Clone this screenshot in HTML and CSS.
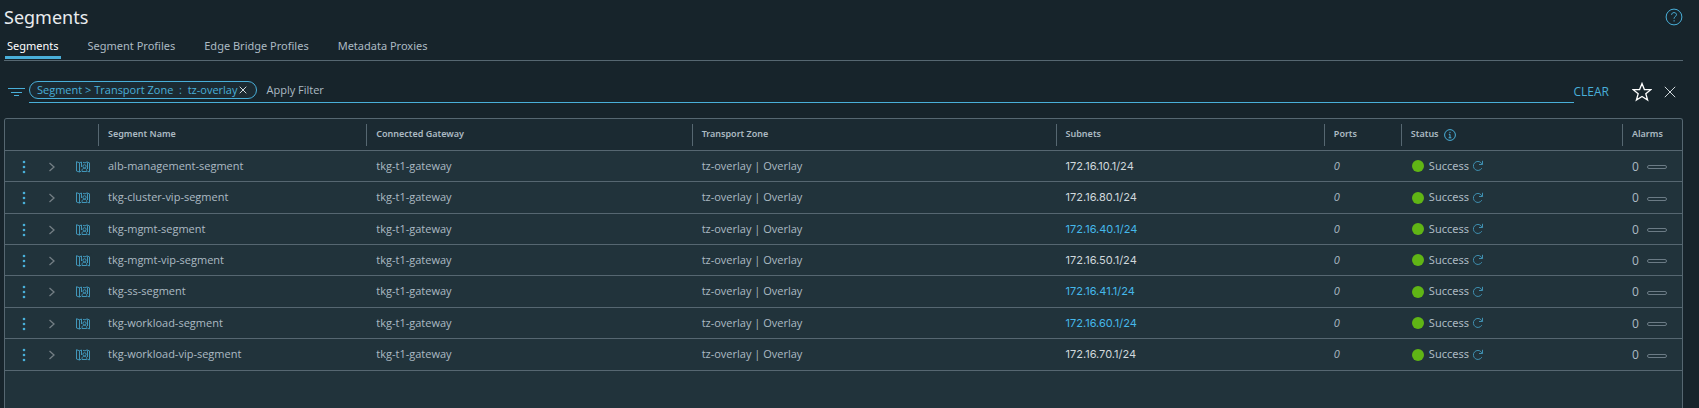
FILE: index.html
```html
<!DOCTYPE html>
<html lang="en">
<head>
<meta charset="utf-8">
<title>Segments</title>
<link rel="stylesheet" href="styles.css">
</head>
<body>
<svg class="sprite" aria-hidden="true">
  <symbol id="i-dots" viewBox="0 0 4 14"><circle cx="2" cy="2" r="1.300"/><circle cx="2" cy="7" r="1.300"/><circle cx="2" cy="12" r="1.300"/></symbol>
  <symbol id="i-chevron" viewBox="0 0 8 12"><path d="M1.500 2 6 6 1.500 10"/></symbol>
  <symbol id="i-segment" viewBox="0 0 14 12"><path d="M5 10.300 3.500 11 .5 10V.7l3 1.100 2-.8M3.500 1.800V11M7 1.300l2 .6L11 .9l2.500 1v9l-2-.6M11.500 1.500V8M5.500 1v5"/><circle cx="8.500" cy="5.300" r="1.600"/><path d="M6 10.500V9.500C6 8 7 7.300 8.500 7.300s2.200.7 2.200 2.200v1Z"/></symbol>
  <symbol id="i-refresh" viewBox="0 0 12 12"><path d="M9.800 8.200A4.500 4.500 0 1 1 9.300 3L10.500 4.300M10.500.8v3.700H7"/></symbol>
</svg>
<div class="page">
  <header class="page-head">
    <h1 class="title">Segments</h1>
    <button class="icon-btn" type="button" aria-label="Help">
      <svg class="help" viewBox="0 0 18 18"><circle cx="9" cy="9" r="7.900"/><path d="M6.600 6.800C6.700 5.300 7.700 4.600 9 4.600s2.500.8 2.500 2.100c0 1.700-2.400 1.900-2.400 3.700v.4M9.100 12.200v1.300"/></svg>
    </button>
  </header>
  <nav class="tabs">
    <a class="tab tab-active" href="#segments" aria-current="page">Segments</a>
    <a class="tab" href="#profiles">Segment Profiles</a>
    <a class="tab" href="#bridge">Edge Bridge Profiles</a>
    <a class="tab" href="#proxies">Metadata Proxies</a>
  </nav>
  <div class="filter">
    <svg class="filter-icon" viewBox="0 0 17 10"><path d="M0 1.500h17M3 5.500h11M6 8.500h5"/></svg>
    <div class="filter-field">
      <span class="chip"><span>Segment &gt; Transport Zone&nbsp; :&nbsp; </span><span class="chip-value">tz-overlay</span>
        <button class="icon-btn" type="button" aria-label="Remove filter"><svg class="chip-x" viewBox="0 0 8 8"><path d="M.7.7l6.600 6.600M7.300.7.7 7.300"/></svg></button>
      </span>
      <input class="filter-input" type="text" placeholder="Apply Filter" aria-label="Apply Filter">
    </div>
    <button class="clear" type="button">CLEAR</button>
    <button class="icon-btn" type="button" aria-label="Save filter"><svg class="star" viewBox="0 0 20 20"><path d="M10 1.500 12.400 7.500 18.800 7.700 13.800 11.700 15.600 18 10 14.400 4.400 18 6.200 11.700 1.200 7.700 7.600 7.500Z"/></svg></button>
    <button class="icon-btn" type="button" aria-label="Close filter"><svg class="close" viewBox="0 0 12 12"><path d="M.8.8l10.400 10.400M11.200.8.8 11.200"/></svg></button>
  </div>
  <main class="panel">
    <table class="grid">
      <colgroup><col class="c-icons"><col class="c-name"><col class="c-gateway"><col class="c-zone"><col class="c-subnet"><col class="c-ports"><col><col class="c-alarms"></colgroup>
      <thead>
        <tr>
          <td></td>
          <th scope="col"><div class="head">Segment Name</div></th>
          <th scope="col"><div class="head">Connected Gateway</div></th>
          <th scope="col"><div class="head">Transport Zone</div></th>
          <th scope="col"><div class="head">Subnets</div></th>
          <th scope="col"><div class="head">Ports</div></th>
          <th scope="col"><div class="head">Status <svg class="info" viewBox="0 0 12 12"><circle cx="6" cy="6" r="5.400"/><path d="M6 2.800v1.200M4.800 5.300H6v3.500M4.600 8.800h2.800"/></svg></div></th>
          <th scope="col"><div class="head">Alarms</div></th>
        </tr>
      </thead>
      <tbody id="rows"></tbody>
    </table>
  </main>
</div>
<script src="app.js"></script>
</body>
</html>
```
FILE: app.js
```js
const segments = [
  ["alb-management-segment", "172.16.10.1/24", false],
  ["tkg-cluster-vip-segment", "172.16.80.1/24", false],
  ["tkg-mgmt-segment", "172.16.40.1/24", true],
  ["tkg-mgmt-vip-segment", "172.16.50.1/24", false],
  ["tkg-ss-segment", "172.16.41.1/24", true],
  ["tkg-workload-segment", "172.16.60.1/24", true],
  ["tkg-workload-vip-segment", "172.16.70.1/24", false]
];

document.getElementById("rows").innerHTML = segments.map(([name, subnet, linked]) => `
  <tr>
    <td><div class="actions">
      <button class="icon-btn" type="button" aria-label="Actions for ${name}"><svg class="dots"><use href="#i-dots"/></svg></button>
      <button class="icon-btn" type="button" aria-label="Expand ${name}"><svg class="chevron"><use href="#i-chevron"/></svg></button>
      <svg class="segment"><use href="#i-segment"/></svg>
    </div></td>
    <td>${name}</td>
    <td>tkg-t1-gateway</td>
    <td>tz-overlay | Overlay</td>
    <td class="subnet">${linked ? `<a class="link" href="#subnet">${subnet}</a>` : subnet}</td>
    <td class="ports">0</td>
    <td><div class="status"><span class="dot"></span><span>Success</span>
      <button class="icon-btn" type="button" aria-label="Refresh ${name}"><svg class="refresh"><use href="#i-refresh"/></svg></button></div></td>
    <td><div class="alarms"><span>0</span><span class="pill"></span></div></td>
  </tr>`).join("");
```
FILE: styles.css
```css
* { box-sizing: border-box; }
body {
  margin: 0;
  background: #17242b;
  color: #acbac3;
  font: 11px/16px "Open Sans", "Noto Sans", sans-serif;
}
svg { display: block; flex: none; fill: none; stroke: currentColor; }
button { padding: 0; border: 0; background: none; color: inherit; font: inherit; cursor: pointer; }
.sprite { position: absolute; width: 0; height: 0; }
.icon-btn { display: flex; }
.page { display: flex; flex-direction: column; height: 100vh; padding: 0 16px 0 4px; overflow: hidden; }
.page-head { display: flex; align-items: center; justify-content: space-between; height: 34px; }
.title { margin: 0; color: #e9ecef; font: 400 18px/24px "Noto Sans", sans-serif; }
.help { width: 18px; height: 18px; color: #49afd9; }
.tabs { display: flex; gap: 25px; height: 27px; padding-left: 1px; border-bottom: 1px solid #566771; font-family: "Noto Sans", sans-serif; }
.tab { height: 25px; padding: 4px 2px 0; color: #acbac3; text-decoration: none; }
.tab-active { border-bottom: 3px solid #49afd9; color: #fff; }
.filter { display: flex; align-items: center; margin-top: 18px; height: 25px; padding-right: 7px; }
.filter-icon { width: 17px; height: 10px; margin: 0 4px; color: #49afd9; }
.filter-field { display: flex; flex: 1; align-items: flex-start; gap: 9px; height: 22px; border-bottom: 1px solid #49afd9; }
.chip { display: flex; align-items: center; height: 18px; padding: 0 9px 0 7px; border: 1px solid #49afd9; border-radius: 9px; background: #1b2a32; color: #49afd9; white-space: pre; }
.chip-value { margin-right: 2px; }
.chip-x { width: 8px; height: 8px; color: #d0d8dc; }
.filter-input { flex: 1; height: 18px; padding: 0; border: 0; outline: 0; background: none; color: #acbac3; font: inherit; }
.filter-input::placeholder { color: #acbac3; opacity: 1; }
.clear { margin-right: 23px; color: #49afd9; font-size: 12px; }
.star { width: 20px; height: 20px; margin-right: 12px; color: #fff; stroke-width: 1.3; }
.close { width: 12px; height: 12px; color: #d0d8dc; }
.panel { flex: 1; margin-top: 14px; border: 1px solid #566771; border-bottom: 0; border-radius: 3px 3px 0 0; background: #21333b; overflow: hidden; }
.grid { width: 100%; border-spacing: 0; table-layout: fixed; }
.c-icons { width: 93px; }
.c-name, .c-subnet { width: 16%; }
.c-gateway { width: 19.4%; }
.c-zone { width: 21.7%; }
.c-ports { width: 77px; }
.c-alarms { width: 60px; }
thead { background: #1b2a32; }
th, td { padding: 0 0 0 10px; border-bottom: 1px solid #566771; text-align: left; white-space: nowrap; }
th { height: 32px; padding: 0; font: 600 9px/16px "Noto Sans", sans-serif; }
.head { display: flex; gap: 5px; height: 22px; padding-left: 9px; border-left: 1px solid #566771; line-height: 20px; }
.info { width: 12px; height: 12px; margin-top: 5px; color: #49afd9; }
tbody td { height: 31px; padding-bottom: 1px; }
tbody tr:nth-child(3n + 2) td, tbody tr:last-child td { height: 32px; }
.actions { display: flex; align-items: center; padding: 2px 0 0 7px; color: #49afd9; }
.dots { width: 4px; height: 14px; fill: #49afd9; stroke: none; }
.chevron { width: 8px; height: 12px; margin: 0 20px 0 22px; color: #737e84; stroke-width: 1.3; }
.segment { width: 14px; height: 12px; opacity: .8; }
.subnet { color: #d0d8dc; font-family: Inter, sans-serif; }
.link { color: #45b8ea; text-decoration: none; }
.ports { font-style: italic; }
.status, .alarms { display: flex; align-items: center; }
.status { font-family: "Noto Sans", sans-serif; }
.dot { width: 12px; height: 12px; margin: 1px 5px 0 1px; border-radius: 50%; background: #60b515; }
.refresh { width: 12px; height: 12px; margin: 1px 0 0 3px; color: #49afd9; opacity: .75; }
.alarms { gap: 8px; padding-top: 2px; font-size: 12px; }
.pill { width: 20px; height: 4px; margin-top: 1px; border: 1px solid #6b7b85; border-radius: 2px; }
```
